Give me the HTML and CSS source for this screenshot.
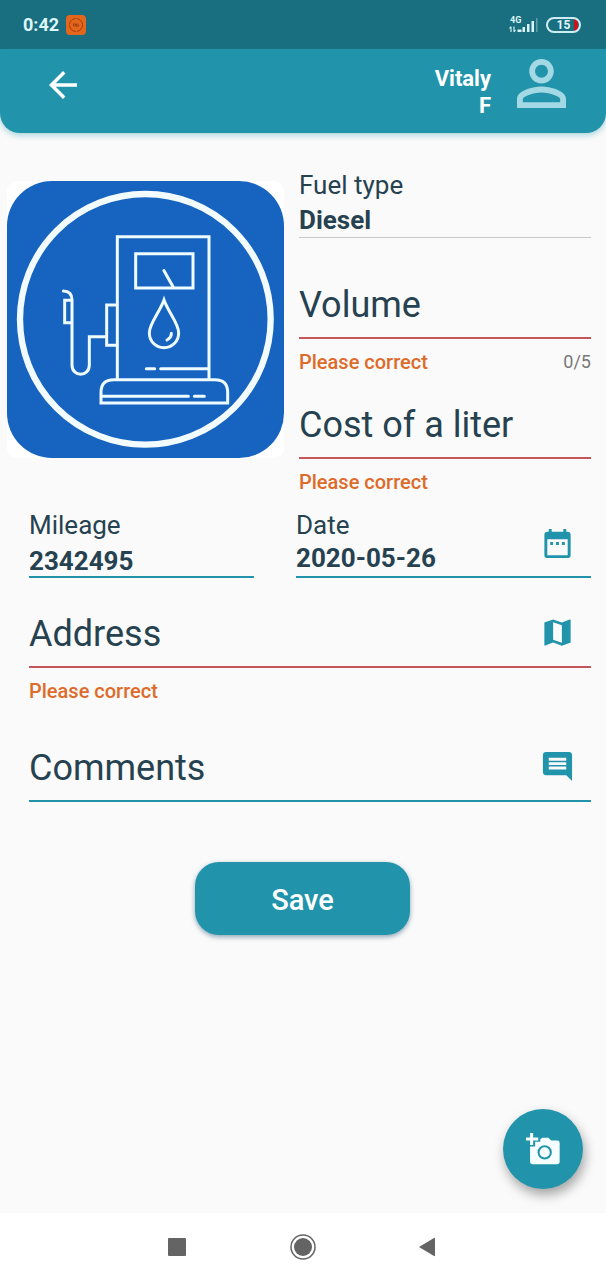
FILE: index.html
```html
<!DOCTYPE html>
<html lang="en">
<head>
<meta charset="utf-8">
<meta name="viewport" content="width=device-width, initial-scale=1">
<title>Refuelling</title>
<link rel="stylesheet" href="styles.css">
</head>
<body>
<div class="status">
  <span class="status-time">0:42</span>
  <svg class="status-app" viewBox="0 0 20 20" aria-hidden="true">
    <rect width="20" height="20" rx="4" fill="#e4661b"/>
    <circle cx="10" cy="10" r="6.5" fill="none" stroke="#9c3d12" stroke-width="1" stroke-dasharray="9 1.2"/>
    <path d="M7.5 8.5v3M9 11.500v-3l1.500 3v-3M12 8.500v3l1-1.500" fill="none" stroke="#9c3d12" stroke-width=".9"/>
  </svg>
  <div class="signal">
    <span class="signal-type">4G</span>
    <svg class="signal-bars" viewBox="0 0 29 16" aria-hidden="true">
      <path d="M2 15V10M.5 11.500 2 9.500M5 9.500v5M5 15 6.500 13" fill="none" stroke="#cdeef4" stroke-width="1.200"/>
      <path d="M8.500 15v-2.500h4V15zM13.500 15v-5h2.500v5zM18 15V7h2.500v8zM22.500 15V4H25v11z" fill="#d9f4f8"/>
      <path d="M27 15V1h1.500v14z" fill="#5f9fac"/>
    </svg>
  </div>
  <div class="battery"><span>15</span></div>
</div>

<header class="header">
  <button class="back" type="button" aria-label="Back">
    <svg viewBox="4 4 16 16"><path d="M20 11H7.830l5.590-5.590L12 4l-8 8 8 8 1.410-1.410L7.830 13H20v-2z"/></svg>
  </button>
  <div class="user">
    <span class="user-name">Vitaly<br>F</span>
    <svg class="user-icon" viewBox="4 4 16 16" aria-hidden="true"><path d="M12 5.900c1.160 0 2.100.940 2.100 2.100s-.940 2.100-2.100 2.100S9.900 9.160 9.900 8s.940-2.100 2.100-2.100m0 9c2.970 0 6.100 1.460 6.100 2.100v1.100H5.900V17c0-.640 3.130-2.100 6.100-2.100M12 4C9.790 4 8 5.790 8 8s1.790 4 4 4 4-1.790 4-4-1.790-4-4-4zm0 9c-2.670 0-8 1.340-8 4v3h16v-3c0-2.660-5.330-4-8-4z"/></svg>
  </div>
</header>

<main>
  <form class="form">
    <div class="top">
      <div class="picture">
        <svg viewBox="22 33 831 831" role="img" aria-label="Fuel pump">
          <rect x="22" y="33" width="831" height="831" rx="135" fill="#1764c0"/>
          <circle cx="437" cy="448" r="376" fill="none" stroke="#f2fcff" stroke-width="19"/>
          <g fill="none" stroke="#eefbff" stroke-width="9" stroke-linecap="round">
            <path d="M353 628V200H628V628"/>
            <path d="M408 251H580V354H408ZM493 302 521 352"/>
            <path d="M493 390C481 425 449 460 449 488C449 515 469 533 493 533C517 533 537 515 537 488C537 460 505 425 493 390Z"/>
            <path d="M515 490Q515 504 502 510"/>
            <path d="M440 596H465M483 596H626"/>
            <path d="M304 699V667Q304 629 342 629H646Q684 629 684 667V699ZM306 679H566M584 679H614"/>
            <path d="M350 405H321V526H350M319 500H269V585C269 622 217 622 217 585V390Q217 363 191 363M215 391H195V458H215"/>
          </g>
        </svg>
      </div>
      <div class="stack">
        <div class="field">
          <label class="label" for="fuel">Fuel type</label>
          <select class="value value-plain" id="fuel"><option>Diesel</option></select>
        </div>
        <div class="stack-errors">
          <div class="field">
            <div class="control control-error">
              <label class="big-label" for="volume">Volume</label>
              <input class="big-input" id="volume" type="text" inputmode="decimal" maxlength="5">
            </div>
            <div class="helper"><span class="error">Please correct</span><span class="count">0/5</span></div>
          </div>
          <div class="field">
            <div class="control control-error">
              <label class="big-label" for="cost">Cost of a liter</label>
              <input class="big-input" id="cost" type="text" inputmode="decimal">
            </div>
            <div class="helper"><span class="error">Please correct</span></div>
          </div>
        </div>
      </div>
    </div>

    <div class="rest">
      <div class="pair">
        <div class="field">
          <label class="label" for="mileage">Mileage</label>
          <input class="value" id="mileage" type="text" inputmode="numeric" value="2342495">
        </div>
        <div class="date">
          <div class="field">
            <label class="label" for="date">Date</label>
            <input class="value value-date" id="date" type="text" value="2020-05-26">
          </div>
          <button class="icon" type="button" aria-label="Pick a date">
            <svg viewBox="0 0 24 24"><path d="M9 11H7v2h2v-2zm4 0h-2v2h2v-2zm4 0h-2v2h2v-2zm2-7h-1V2h-2v2H8V2H6v2H5c-1.110 0-1.990.900-1.990 2L3 20c0 1.100.890 2 2 2h14c1.100 0 2-.900 2-2V6c0-1.100-.900-2-2-2zm0 16H5V9h14v11z"/></svg>
          </button>
        </div>
      </div>
      <div class="field">
        <div class="control control-error">
          <label class="big-label" for="address">Address</label>
          <input class="big-input" id="address" type="text">
          <button class="icon" type="button" aria-label="Choose on map">
            <svg viewBox="0 0 24 24"><path d="M20.500 3l-.160.030L15 5.100 9 3 3.360 4.900c-.210.070-.360.250-.360.480V20.500c0 .280.220.500.500.500l.160-.030L9 18.900l6 2.100 5.640-1.900c.210-.070.360-.250.360-.480V3.500c0-.280-.220-.500-.500-.500zM15 19l-6-2.110V5l6 2.110V19z"/></svg>
          </button>
        </div>
        <div class="helper"><span class="error">Please correct</span></div>
      </div>
      <div class="control comments">
        <label class="big-label" for="comments">Comments</label>
        <input class="big-input" id="comments" type="text">
        <button class="icon" type="button" aria-label="Write a comment">
          <svg viewBox="0 0 24 24"><path d="M21.990 4c0-1.100-.890-2-1.990-2H4c-1.100 0-2 .900-2 2v12c0 1.100.900 2 2 2h14l4 4-.010-18zM18 14H6v-2h12v2zm0-3H6V9h12v2zm0-3H6V6h12v2z"/></svg>
        </button>
      </div>
    </div>

    <button class="save" type="button">Save</button>
  </form>
  <button class="fab" type="button" aria-label="Add a photo">
    <svg viewBox="0 0 100 94">
      <path d="M12 40H27V26H42V18L48 14H66L74 22H92Q99 22 99 29V84Q99 92 91 92H20Q12 92 12 84Z"/>
      <circle cx="55" cy="57" r="18" fill="none" stroke="#2194ab" stroke-width="6"/>
      <path d="M12 0h9v13h15v9H21v13h-9V22H0v-9h12z"/>
    </svg>
  </button>
</main>

<nav class="nav">
  <button type="button" aria-label="Recent apps"><svg viewBox="0 0 28 28"><rect x="5" y="5" width="18" height="18" rx="1"/></svg></button>
  <button type="button" aria-label="Home"><svg viewBox="0 0 28 28"><circle cx="14" cy="14" r="9"/><circle cx="14" cy="14" r="12" fill="none" stroke="#646464" stroke-width="1.500"/></svg></button>
  <button type="button" aria-label="Back"><svg viewBox="0 0 28 28"><path d="M4 14 19 5Q20 4.500 20 5.500V22.500Q20 23.500 19 23Z"/></svg></button>
</nav>
</body>
</html>
```

FILE: styles.css
```css
* { box-sizing: border-box; }

body {
  margin: 0;
  min-height: 100vh;
  display: flex;
  flex-direction: column;
  background: #fafafa;
  color: #264250;
  font-family: Roboto, "Noto Sans", sans-serif;
}

button, input, select {
  margin: 0;
  padding: 0;
  border: 0;
  border-radius: 0;
  background: none;
  color: inherit;
  font: inherit;
}

button { cursor: pointer; }
svg { display: block; }

.status {
  display: flex;
  align-items: center;
  height: 49px;
  padding: 0 25px 0 23px;
  background: #196f80;
  color: #dff6fa;
}
.status-time { font-size: 18px; font-weight: 700; }
.status-app { width: 20px; height: 20px; margin-left: 7px; }
.signal {
  display: grid;
  width: 29px;
  margin-left: auto;
}
.signal-type, .signal-bars { grid-area: 1 / 1; }
.signal-type {
  padding-left: 1px;
  font-size: 9px;
  line-height: 6px;
  font-weight: 700;
}
.signal-bars { width: 29px; height: 16px; }
.battery {
  display: flex;
  align-items: center;
  justify-content: center;
  width: 35px;
  height: 16px;
  margin-left: 8px;
  border: 2px solid #cdeef4;
  border-radius: 8px;
  background: linear-gradient(#c4161c, #c4161c) 26px 0 / 4px 100% no-repeat;
  font-size: 12px;
  font-weight: 700;
}

.header {
  display: flex;
  justify-content: space-between;
  align-items: flex-start;
  height: 84px;
  padding: 10px 40px 0 49px;
  border-radius: 0 0 20px 20px;
  background: #2194ab;
  color: #fff;
  box-shadow: 0 2px 6px #2194ab66;
}
.back { margin-top: 12px; }
.back svg { width: 28px; height: 28px; fill: #fff; }
.user { display: flex; gap: 26px; }
.user-name {
  padding-top: 6px;
  font-size: 22px;
  line-height: 27px;
  font-weight: 700;
  text-align: right;
}
.user-icon { width: 49px; height: 49px; fill: #a2d9e4; }

main { position: relative; flex: 1; }

.form {
  display: flex;
  flex-direction: column;
  padding: 36px 15px 48px 7px;
}

.top {
  display: grid;
  grid-template-columns: 277fr 292fr;
  gap: 15px;
}
.picture {
  align-self: start;
  margin-top: 12px;
  border-radius: 10px;
  background: #fff;
}
.picture svg { width: 100%; }

.stack { display: flex; flex-direction: column; gap: 31px; }
.stack-errors { display: flex; flex-direction: column; gap: 12px; }

.field { display: flex; flex-direction: column; min-width: 0; }
.label { font-size: 26px; line-height: 32px; }
.value {
  width: 100%;
  height: 37px;
  padding-top: 4px;
  border-bottom: 2px solid #2194ab;
  font-size: 26px;
  font-weight: 700;
  appearance: none;
}
.value-plain { padding-top: 1px; border-bottom: 1px solid #c8c8c8; }
.value-date { padding: 0 0 2px; }

.control {
  display: grid;
  grid-template-columns: 1fr auto;
  align-items: center;
  height: 70px;
  border-bottom: 2px solid #2194ab;
}
.control-error { border-bottom-color: #c4565a; }
.big-label {
  grid-area: 1 / 1;
  padding-top: 3px;
  font-size: 36px;
  line-height: 42px;
}
.big-input {
  grid-area: 1 / 1;
  width: 100%;
  height: 42px;
  font-size: 36px;
}

.helper {
  display: flex;
  justify-content: space-between;
  margin-top: 8px;
  font-size: 20px;
  line-height: 30px;
}
.error { color: #dd6b2a; font-weight: 500; }
.count { color: #777; font-size: 18px; }

.rest { padding: 12px 0 0 22px; }
.pair {
  display: grid;
  grid-template-columns: 225fr 295fr;
  gap: 42px;
  margin-bottom: 20px;
}
.date { display: grid; grid-template-columns: 1fr; align-items: center; }
.date .field, .date .icon { grid-area: 1 / 1; }
.date .icon { justify-self: end; }
.icon { padding-right: 16px; }
.icon svg { width: 35px; height: 35px; fill: #2194ab; }
.comments { margin-top: 26px; }

.save {
  align-self: center;
  width: 215px;
  height: 73px;
  margin-top: 60px;
  margin-left: 7px;
  padding-top: 2px;
  border-radius: 24px;
  background: #2194ab;
  color: #fff;
  font-size: 29px;
  font-weight: 500;
  box-shadow: 0 2px 5px #2a5a7a88;
}

.fab {
  position: absolute;
  right: 23px;
  bottom: 24px;
  display: grid;
  place-items: center;
  width: 80px;
  height: 80px;
  border-radius: 50%;
  background: #2194ab;
  box-shadow: 2px 6px 12px #00000059;
}
.fab svg { width: 34px; height: 32px; fill: #f7feff; }

.nav {
  display: flex;
  justify-content: center;
  align-items: center;
  gap: 98px;
  height: 67px;
  background: #fff;
}
.nav svg { width: 28px; height: 28px; fill: #646464; }
```
